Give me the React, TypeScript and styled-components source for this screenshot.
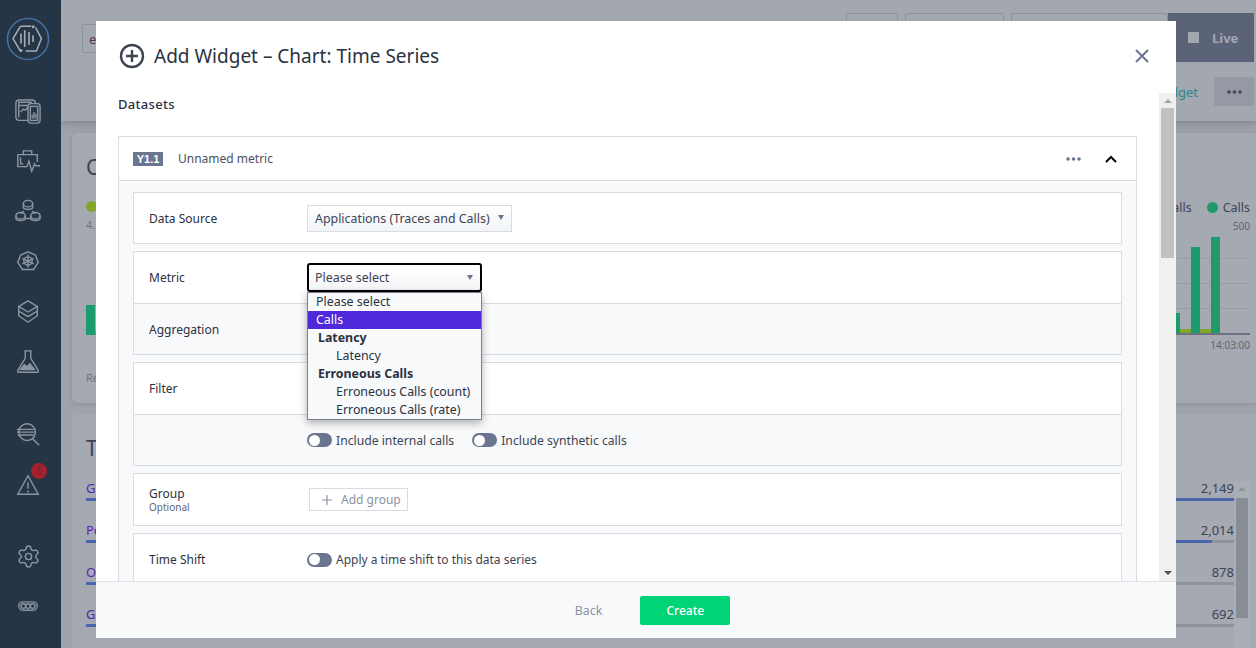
import * as React from "react"
import styled, { createGlobalStyle } from "styled-components"
import { Settings } from "lucide-react"

const FONT = `"Noto Sans", "Liberation Sans", sans-serif`

const GlobalStyle = createGlobalStyle`
  html, body {
    margin: 0;
    height: 100%;
    overflow: hidden;
    background: #a3a7b0;
    font-family: ${FONT};
    color: #2a3140;
  }
  * { box-sizing: border-box; }
`

const NAV_TOP = [
  <g key="a">
    <rect x="1" y="1" width="21" height="22" rx="3.500" />
    <path d="M3.500 7h14M4 20V3.500h14" />
    <rect x="14" y="5" width="13" height="21" rx="3" fill="#253545" />
    <rect x="16.500" y="8" width="8" height="15" />
    <path d="M6 14l3-3 2 1 3-3M18.500 21v-4M20.500 21v-7M22.500 21v-5" />
  </g>,
  <g key="b">
    <path d="M9 6V2h9v4M3 6h21v8M3 6v13h8M6 9v7h3" />
    <path d="M9 19h4l2-6 3 11 3-8 1 2h5" />
  </g>,
  <g key="c">
    <ellipse cx="14" cy="5" rx="5" ry="3.500" />
    <path d="M9 5v4c0 3 10 3 10 0V5M9.500 13l-3 3M18.500 13l3 3M11 21h6" />
    <ellipse cx="6" cy="18" rx="5" ry="3.500" />
    <ellipse cx="22" cy="18" rx="5" ry="3.500" />
    <path d="M1 18v3c0 3 10 3 10 0v-3M17 18v3c0 3 10 3 10 0v-3" />
  </g>,
  <g key="d">
    <path d="M14 3l8 3.500 3 8-5 7.500H8l-5-7.500 3-8z" />
    <circle cx="14" cy="13" r="4.500" />
    <path d="M14 6v14M8 10l12 6M20 10L8 16" />
  </g>,
  <g key="e">
    <path d="M14 2l10 6-10 6L4 8z" />
    <path d="M4 8v10l10 7 10-7V8M4 13l10 6 10-6" />
  </g>,
  <g key="f">
    <path d="M10 2h8M11 2v8L3 23c-.500 1 0 2 1 2h20c1 0 1.500-1 1-2l-8-13V2" />
    <path d="M6 22l4-5 3 2 3-3 5 6z" fill="#8d95a2" />
  </g>,
]

const Nav = () => (
  <Sidebar>
    <Logo viewBox="0 0 44 44">
      <circle cx="22" cy="22" r="20.500" stroke="#44709f" strokeWidth="1.600" />
      <path d="M14.400 9.300h11M14.400 9.300L7 21.600 14.400 34M19.700 34h10.700l5-12.400-5.700-11" stroke="#a7adb6" strokeWidth="1.500" />
      <path d="M15 16.600v10M18.700 13.300V30M23 15v13M27 18.300V25" stroke="#a7adb6" strokeWidth="1.600" />
      <circle cx="27.300" cy="9.800" r="1.500" fill="#a7adb6" />
      <circle cx="15" cy="33.500" r="1.500" fill="#a7adb6" />
    </Logo>
    <NavGroup>
      {NAV_TOP.map((icon, i) => (
        <NavIcon key={i} viewBox="0 0 28 28">
          {icon}
        </NavIcon>
      ))}
    </NavGroup>
    <NavGroup $gap={25}>
      <NavIcon viewBox="0 0 28 28">
        <circle cx="13" cy="12" r="9" />
        <path d="M19 19l7 7M2 9h18M2 12h19M3 15h17" />
      </NavIcon>
      <AlertWrap>
        <NavIcon viewBox="0 0 28 28">
          <path d="M14 4L3 24h22zM14 11v7M14 20v2" />
        </NavIcon>
        <Badge>1</Badge>
      </AlertWrap>
    </NavGroup>
    <NavGroup $gap={24}>
      <Settings size={25} color="#8d95a2" strokeWidth={1.400} />
      <NavIcon viewBox="0 0 28 28">
        <rect x="4" y="9.500" width="20" height="9" rx="4.500" />
        <circle cx="9" cy="14" r="2.500" />
        <circle cx="14" cy="14" r="2.500" />
        <circle cx="19" cy="14" r="2.500" />
      </NavIcon>
    </NavGroup>
  </Sidebar>
)

const Backdrop = () => (
  <Page>
    <TopBar>
      <TopRow>
        <SearchBox>e</SearchBox>
        <TopActions>
          <TopButton $w={52} />
          <TopButton $w={99} />
          <TopButton $w={157} />
          <LiveButton>
            <LiveSquare />
            Live
          </LiveButton>
        </TopActions>
      </TopRow>
      <ToolRow>
        <WidgetLink>Add Widget</WidgetLink>
        <MoreButton>
          <DotsIcon fill="#41485a" />
        </MoreButton>
      </ToolRow>
    </TopBar>
    <Cards>
      <ChartCard>
        <ChartLeft>
          <CardHeading>C</CardHeading>
          <LegendDot $c="#82a52c" />
          <SmallMuted>4.</SmallMuted>
          <LeftBars>
            <GreenBar $h={30} />
            <YellowBar />
          </LeftBars>
          <SmallMuted>Re</SmallMuted>
        </ChartLeft>
        <ChartRight>
          <LegendRow>
            <span>alls</span>
            <LegendDot $c="#1f9a6c" />
            <span>Calls</span>
          </LegendRow>
          <AxisLabel>500</AxisLabel>
          <Plot>
            <GreenBar $h={20} />
            <YellowBar />
            <GreenBar $h={86} />
            <YellowBar />
            <GreenBar $h={96} />
          </Plot>
          <AxisLabel>14:03:00</AxisLabel>
        </ChartRight>
      </ChartCard>
      <ListCard>
        <CardHeading>T</CardHeading>
        <ListColumns>
          <ListLeft>
            {["G", "Po", "O", "G"].map((t, i) => (
              <ListLeftRow key={i}>
                <ListLink>{t}</ListLink>
                <BlueRule />
              </ListLeftRow>
            ))}
          </ListLeft>
          <ListRight>
            {[
              ["2,149", 100],
              ["2,014", 62],
              ["878", 0],
              ["692", 0],
            ].map(([n, w]) => (
              <ListRightRow key={n as string}>
                <ListValue>{n}</ListValue>
                <BarTrack>
                  <BarFill style={{ width: `${w}%` }} />
                </BarTrack>
              </ListRightRow>
            ))}
          </ListRight>
          <PageScroll>
            <ArrowUp $c="#8e929b" />
            <PageThumb />
          </PageScroll>
        </ListColumns>
      </ListCard>
    </Cards>
  </Page>
)

const METRICS = [
  { label: "Please select", kind: "option" },
  { label: "Calls", kind: "active" },
  { label: "Latency", kind: "group" },
  { label: "Latency", kind: "child" },
  { label: "Erroneous Calls", kind: "group" },
  { label: "Erroneous Calls (count)", kind: "child" },
  { label: "Erroneous Calls (rate)", kind: "child" },
]

const Toggle = () => (
  <ToggleTrack>
    <ToggleKnob />
  </ToggleTrack>
)

const DotsIcon = ({ fill = "#6a7590" }: { fill?: string }) => (
  <svg width="15" height="4" viewBox="0 0 15 4" fill={fill}>
    <circle cx="2" cy="2" r="1.800" />
    <circle cx="7.500" cy="2" r="1.800" />
    <circle cx="13" cy="2" r="1.800" />
  </svg>
)

const WidgetModal = () => (
  <Modal>
    <ModalHeader>
      <TitleGroup>
        <svg width="26" height="26" viewBox="0 0 26 26" fill="none" stroke="#3d4452" strokeWidth="2.400">
          <circle cx="13" cy="13" r="11" />
          <path d="M13 7v12M7 13h12" />
        </svg>
        <ModalTitle>Add Widget – Chart: Time Series</ModalTitle>
      </TitleGroup>
      <svg width="14" height="14" viewBox="0 0 14 14" stroke="#6a7590" strokeWidth="2">
        <path d="M1 1l12 12M13 1L1 13" />
      </svg>
    </ModalHeader>
    <ModalMiddle>
      <ScrollBody>
        <SectionTitle>Datasets</SectionTitle>
        <DatasetCard>
          <DatasetHeader>
            <SeriesTag>Y1.1</SeriesTag>
            <SeriesName>Unnamed metric</SeriesName>
            <HeaderTools>
              <DotsIcon />
              <svg width="12" height="8" viewBox="0 0 12 8" fill="none" stroke="#000" strokeWidth="2">
                <path d="M1 7l5-5 5 5" />
              </svg>
            </HeaderTools>
          </DatasetHeader>
          <DatasetBody>
            <FieldCard>
              <FieldRow $short>
                <FieldLabel $nudge>Data Source</FieldLabel>
                <SelectBox $w={205}>
                  Applications (Traces and Calls)
                  <Caret />
                </SelectBox>
              </FieldRow>
            </FieldCard>
            <FieldCard>
              <FieldRow>
                <FieldLabel>Metric</FieldLabel>
                <SelectAnchor>
                  <SelectBox $w={175} $focused>
                    Please select
                    <Caret />
                  </SelectBox>
                  <OptionList>
                    {METRICS.map((m, i) => (
                      <OptionItem key={i} $kind={m.kind}>
                        {m.label}
                      </OptionItem>
                    ))}
                  </OptionList>
                </SelectAnchor>
              </FieldRow>
              <FieldRow $muted>
                <FieldLabel $nudge>Aggregation</FieldLabel>
              </FieldRow>
            </FieldCard>
            <FieldCard>
              <FieldRow>
                <FieldLabel>Filter</FieldLabel>
              </FieldRow>
              <FieldRow $muted>
                <FieldLabel />
                <ToggleLabel>
                  <Toggle />
                  Include internal calls
                </ToggleLabel>
                <ToggleLabel>
                  <Toggle />
                  Include synthetic calls
                </ToggleLabel>
              </FieldRow>
            </FieldCard>
            <FieldCard>
              <FieldRow>
                <FieldLabel>
                  Group
                  <OptionalNote>Optional</OptionalNote>
                </FieldLabel>
                <AddGroupButton>
                  <svg width="10" height="10" viewBox="0 0 10 10" stroke="#8b92a1" strokeWidth="1.200">
                    <path d="M5 0v10M0 5h10" />
                  </svg>
                  Add group
                </AddGroupButton>
              </FieldRow>
            </FieldCard>
            <FieldCard>
              <FieldRow>
                <FieldLabel>Time Shift</FieldLabel>
                <ToggleLabel $size={12}>
                  <Toggle />
                  Apply a time shift to this data series
                </ToggleLabel>
              </FieldRow>
            </FieldCard>
          </DatasetBody>
        </DatasetCard>
      </ScrollBody>
      <ScrollTrack>
        <ArrowUp $c="#a6a6a6" />
        <ScrollThumb />
        <ArrowDown />
      </ScrollTrack>
    </ModalMiddle>
    <ModalFooter>
      <BackButton>Back</BackButton>
      <CreateButton>Create</CreateButton>
    </ModalFooter>
  </Modal>
)

export default function App() {
  return (
    <React.Fragment>
      <GlobalStyle />
      <Shell>
        <Nav />
        <Backdrop />
        <WidgetModal />
      </Shell>
    </React.Fragment>
  )
}

const Shell = styled.div`
  display: flex;
  width: 1256px;
  height: 648px;
  overflow: hidden;
`

const Sidebar = styled.nav`
  flex: 0 0 61px;
  display: flex;
  flex-direction: column;
  align-items: center;
  background: #253545;
  padding: 17px 5px 0 0;
`

const Logo = styled.svg`
  width: 44px;
  height: 44px;
  fill: none;
  margin-bottom: 38px;
`

const NavGroup = styled.div<{ $gap?: number }>`
  display: flex;
  flex-direction: column;
  align-items: center;
  gap: ${p => p.$gap ?? 24}px;
  margin-bottom: 46px;
  &:last-child {
    margin: 0;
  }
`

const NavIcon = styled.svg`
  width: 28px;
  height: 26px;
  fill: none;
  stroke: #8d95a2;
  stroke-width: 1.500;
`

const AlertWrap = styled.div`
  position: relative;
  height: 26px;
`

const Badge = styled.span`
  position: absolute;
  top: -9px;
  left: 17px;
  width: 16px;
  height: 16px;
  border-radius: 50%;
  background: #a3222f;
  color: #6d2a35;
  font-size: 10px;
  line-height: 16px;
  text-align: center;
`

const Page = styled.main`
  flex: 1;
  min-width: 0;
  display: flex;
  flex-direction: column;
  background: #9fa3ac;
`

const TopBar = styled.header`
  flex: 0 0 121px;
  background: #a3a7b0;
  box-shadow: 0 2px 8px rgba(60, 65, 80, 0.35);
  padding: 13px 2px 0 21px;
`

const TopRow = styled.div`
  display: flex;
  justify-content: space-between;
  height: 49px;
`

const SearchBox = styled.div`
  width: 200px;
  height: 29px;
  margin-top: 11px;
  border: 1px solid #8e929c;
  border-radius: 2px;
  padding: 5px 6px;
  font-size: 13px;
  color: #4a3a44;
`

const TopActions = styled.div`
  display: flex;
  gap: 7px;
`

const TopButton = styled.div<{ $w: number }>`
  width: ${p => p.$w}px;
  border: 1px solid #8e929c;
  border-radius: 2px;
`

const LiveButton = styled.div`
  width: 86px;
  margin-left: -7px;
  background: #5a6378;
  color: #a3a7b0;
  font-size: 13px;
  font-weight: 700;
  display: flex;
  align-items: center;
  gap: 13px;
  padding-left: 20px;
`

const LiveSquare = styled.span`
  width: 11px;
  height: 11px;
  background: #a3a7b0;
`

const ToolRow = styled.div`
  display: flex;
  justify-content: flex-end;
  align-items: center;
  gap: 16px;
  height: 29px;
  margin-top: 15px;
`

const WidgetLink = styled.span`
  font-size: 13px;
  color: #2a8a8e;
`

const MoreButton = styled.div`
  width: 40px;
  height: 29px;
  background: #9599a4;
  border-radius: 2px;
  display: flex;
  align-items: center;
  justify-content: center;
`

const Cards = styled.div`
  flex: 1;
  min-height: 0;
  display: flex;
  flex-direction: column;
  gap: 11px;
  padding: 12px 0 0 11px;
`

const ChartCard = styled.section`
  flex: 0 0 270px;
  display: flex;
  justify-content: space-between;
  background: #a5a9b2;
  border-radius: 6px 0 0 6px;
  box-shadow: 0 1px 4px rgba(70, 75, 90, 0.25);
  padding: 20px 6px 0 14px;
`

const CardHeading = styled.h2`
  margin: 0;
  font-size: 21px;
  line-height: 29px;
  font-weight: 400;
  color: #3d4452;
`

const ChartLeft = styled.div`
  display: flex;
  flex-direction: column;
  align-items: flex-start;
`

const SmallMuted = styled.span`
  color: #6e7380;
  font-size: 11px;
  line-height: 14px;
  margin-top: 6px;
  &:last-child {
    margin-top: 36px;
  }
`

const LegendDot = styled.span<{ $c: string }>`
  display: inline-block;
  width: 11px;
  height: 11px;
  border-radius: 50%;
  margin-top: 19px;
  background: ${p => p.$c};
`

const LeftBars = styled.div`
  display: flex;
  align-items: flex-end;
  margin-top: 73px;
`

const GreenBar = styled.div<{ $h: number }>`
  width: 9px;
  height: ${p => p.$h}px;
  background: #1f9a6c;
`

const YellowBar = styled.div`
  width: 11px;
  height: 4px;
  background: #82a52c;
`

const ChartRight = styled.div`
  width: 90px;
  padding-top: 46px;
  display: flex;
  flex-direction: column;
  align-items: flex-end;
  font-size: 12.500px;
  color: #3d4452;
`

const LegendRow = styled.div`
  display: flex;
  align-items: center;
  gap: 5px;
  & > span:first-child {
    margin-right: 10px;
  }
  & > span:nth-child(2) {
    margin-top: 0;
  }
`

const AxisLabel = styled.span`
  font-size: 10px;
  line-height: 14px;
  color: #61656f;
  margin-top: 3px;
`

const Plot = styled.div`
  display: flex;
  align-items: flex-end;
  align-self: stretch;
  justify-content: flex-end;
  height: 101px;
  padding-right: 30px;
  margin-top: 1px;
  border-bottom: 2px solid #6d7180;
  background: repeating-linear-gradient(#a5a9b2 0 24px, #999da6 24px 25px);
`

const ListCard = styled.section`
  flex: 1;
  min-height: 0;
  background: #a5a9b2;
  border-radius: 6px 0 0 0;
  padding: 20px 6px 0 14px;
`

const ListColumns = styled.div`
  display: flex;
  margin-top: 16px;
`

const ListLeft = styled.div`
  width: 30px;
  margin-right: auto;
`

const ListLeftRow = styled.div`
  height: 42px;
`

const ListLink = styled.div`
  font-size: 13px;
  line-height: 18px;
  color: #5a23b5;
`

const BlueRule = styled.div`
  height: 3px;
  margin-top: 1px;
  background: #4a66ad;
`

const ListRight = styled.div`
  width: 58px;
`

const ListRightRow = styled.div`
  height: 42px;
  text-align: right;
`

const ListValue = styled.div`
  font-size: 13px;
  line-height: 18px;
  color: #3d4452;
`

const BarTrack = styled.div`
  height: 3px;
  margin-top: 1px;
  background: #8e929c;
`

const BarFill = styled.div`
  height: 100%;
  background: #4a66ad;
`

const PageScroll = styled.div`
  width: 16px;
  height: 170px;
  margin-top: 2px;
  background: #a9adb4;
  padding: 0 2px;
`

const PageThumb = styled.div`
  height: 120px;
  margin-top: 7px;
  background: #888c95;
`

const Modal = styled.div`
  position: fixed;
  left: 96px;
  top: 21px;
  width: 1080px;
  height: 617px;
  background: #fff;
  display: flex;
  flex-direction: column;
`

const ModalHeader = styled.div`
  flex: 0 0 72px;
  display: flex;
  align-items: center;
  justify-content: space-between;
  padding: 0 27px 2px 23px;
`

const TitleGroup = styled.div`
  display: flex;
  align-items: center;
  gap: 9px;
`

const ModalTitle = styled.h1`
  margin: 0;
  font-size: 19px;
  font-weight: 400;
  color: #2a3140;
`

const ModalMiddle = styled.div`
  flex: 1;
  min-height: 0;
  display: flex;
`

const ScrollBody = styled.div`
  flex: 1;
  min-width: 0;
  overflow: hidden;
  padding: 1px 22px 0;
`

const SectionTitle = styled.h3`
  margin: 0 0 21px;
  font-size: 13px;
  line-height: 21px;
  font-weight: 500;
  letter-spacing: 0.3px;
  color: #2a3140;
`

const DatasetCard = styled.div`
  border: 1px solid #d9dce3;
`

const DatasetHeader = styled.div`
  height: 44px;
  display: flex;
  align-items: center;
  padding: 0 19px 0 14px;
  border-bottom: 1px solid #d9dce3;
`

const SeriesTag = styled.span`
  width: 30px;
  height: 14px;
  background: #6a7590;
  color: #fff;
  font: 700 11px/14px "Liberation Sans", sans-serif;
  text-align: center;
`

const SeriesName = styled.span`
  margin-left: 15px;
  font-size: 12px;
  color: #4b5160;
`

const HeaderTools = styled.div`
  margin-left: auto;
  display: flex;
  align-items: center;
  gap: 24px;
`

const DatasetBody = styled.div`
  background: #f8f9fb;
  padding: 11px 14px;
  display: flex;
  flex-direction: column;
  gap: 7px;
`

const FieldCard = styled.div`
  border: 1px solid #d9dce3;
  background: #fff;
`

const FieldRow = styled.div<{ $muted?: boolean; $short?: boolean }>`
  height: ${p => (p.$short ? 50 : 51)}px;
  display: flex;
  align-items: center;
  padding-left: 15px;
  background: ${p => (p.$muted ? "#f8f9fb" : "#fff")};
  border-top: ${p => (p.$muted ? "1px solid #d9dce3" : "none")};
`

const FieldLabel = styled.div<{ $nudge?: boolean }>`
  flex: 0 0 158px;
  margin-top: ${p => (p.$nudge ? 2 : 0)}px;
  font-size: 12px;
  line-height: 14px;
  color: #2a3140;
`

const OptionalNote = styled.div`
  font-size: 10px;
  line-height: 12px;
  color: #5f6675;
`

const SelectAnchor = styled.div`
  position: relative;
`

const SelectBox = styled.div<{ $w: number; $focused?: boolean }>`
  position: relative;
  width: ${p => p.$w}px;
  height: ${p => (p.$focused ? 29 : 27)}px;
  display: flex;
  align-items: center;
  padding-left: ${p => (p.$focused ? 6 : 7)}px;
  font-size: 12.400px;
  color: #3d4452;
  background: linear-gradient(#fff, #f3f4f7);
  border: ${p => (p.$focused ? "2px solid #000" : "1px solid #d9dce3")};
  border-radius: ${p => (p.$focused ? 3 : 0)}px;
`

const Caret = styled.span`
  position: absolute;
  right: 7px;
  top: 50%;
  margin-top: -3px;
  border: 3.500px solid transparent;
  border-top: 5px solid #6a7590;
  border-bottom: 0;
`

const OptionList = styled.div`
  position: absolute;
  top: 29px;
  left: 0;
  width: 175px;
  background: #f8f9fb;
  border: 1px solid #7a7f8a;
  box-shadow: 0 3px 8px rgba(0, 0, 0, 0.3);
  z-index: 2;
`

const OptionItem = styled.div<{ $kind: string }>`
  height: 18px;
  font-size: 12.400px;
  line-height: 18px;
  white-space: nowrap;
  color: ${p => (p.$kind === "active" ? "#fff" : "#2a3140")};
  background: ${p => (p.$kind === "active" ? "#4f28dc" : "transparent")};
  font-weight: ${p => (p.$kind === "group" ? 700 : 400)};
  padding-left: ${p => (p.$kind === "child" ? 28 : p.$kind === "group" ? 10 : 8)}px;
`

const ToggleLabel = styled.label<{ $size?: number }>`
  display: inline-flex;
  align-items: center;
  gap: 4px;
  margin-right: 18px;
  font-size: ${p => p.$size ?? 12.200}px;
  color: #3d4452;
`

const ToggleTrack = styled.span`
  width: 25px;
  height: 14px;
  padding: 1.500px;
  border-radius: 7px;
  background: #6a7590;
`

const ToggleKnob = styled.span`
  display: block;
  width: 11px;
  height: 11px;
  border-radius: 50%;
  background: #fff;
`

const AddGroupButton = styled.div`
  width: 99px;
  height: 23px;
  margin-left: 2px;
  display: flex;
  align-items: center;
  gap: 9px;
  padding-left: 12px;
  border: 1px solid #d9dce3;
  font-size: 12px;
  color: #8b92a1;
`

const ScrollTrack = styled.div`
  flex: 0 0 17px;
  display: flex;
  flex-direction: column;
  align-items: center;
  background: #f0f0f0;
  padding: 0 2px;
`

const ArrowUp = styled.span<{ $c: string }>`
  display: block;
  margin: 6px auto 5px;
  width: 0;
  border: 4px solid transparent;
  border-bottom: 4px solid ${p => p.$c};
  border-top: 0;
`

const ArrowDown = styled.span`
  margin: auto auto 6px;
  width: 0;
  border: 4px solid transparent;
  border-top: 4px solid #505050;
  border-bottom: 0;
`

const ScrollThumb = styled.div`
  align-self: stretch;
  height: 150px;
  background: #c1c1c1;
`

const ModalFooter = styled.div`
  flex: 0 0 57px;
  display: flex;
  align-items: center;
  justify-content: center;
  gap: 38px;
  padding-left: 33px;
  background: #f8f9fb;
  border-top: 1px solid #dfe1e6;
`

const BackButton = styled.span`
  font-size: 12.400px;
  color: #8b92a1;
`

const CreateButton = styled.div`
  width: 90px;
  height: 29px;
  background: #00d474;
  border-radius: 2px;
  color: #fff;
  font-size: 12px;
  font-weight: 500;
  line-height: 29px;
  text-align: center;
`
